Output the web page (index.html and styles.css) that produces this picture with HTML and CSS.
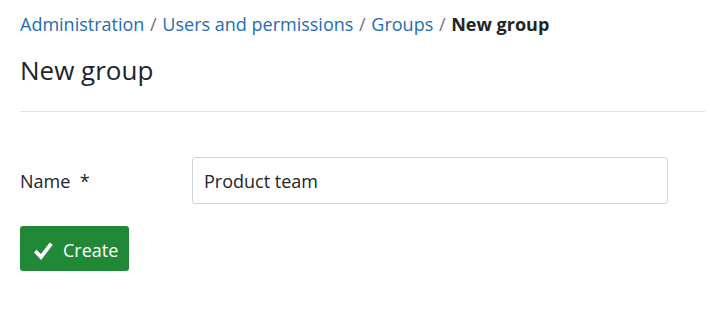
FILE: index.html
```html
<!DOCTYPE html>
<html lang="en">
<head>
    <meta charset="UTF-8">
    <meta name="viewport" content="width=device-width, initial-scale=1.0">
    <title>New group</title>
    <link rel="stylesheet" href="styles.css">
</head>
<body>
    <nav class="breadcrumb">
        <a href="#">Administration</a>
        <span class="sep">/</span>
        <a href="#">Users and permissions</a>
        <span class="sep">/</span>
        <a href="#">Groups</a>
        <span class="sep">/</span>
        <span class="current">New group</span>
    </nav>

    <h1>New group</h1>
    <hr>

    <form class="group-form">
        <div class="form-row">
            <label for="name">Name &nbsp;*</label>
            <input type="text" id="name" name="name" value="Product team">
        </div>
        <button type="submit" class="btn-create">
            <svg class="icon" width="20" height="19" viewBox="0 0 20 19">
                <polyline points="2.3,10 8,16 18.3,2.6" fill="none" stroke="#fff" stroke-width="3.8"/>
            </svg>
            <span>Create</span>
        </button>
    </form>
</body>
</html>
```
FILE: styles.css
```css
body {
    font-family: "Open Sans", sans-serif;
    margin: 0;
    padding: 10px 1px 0 20px;
    color: #212529;
    background-color: white;
}
.breadcrumb {
    font-size: 18px;
    line-height: 28px;
    white-space: nowrap;
}
.breadcrumb a {
    color: #1e6db2;
    text-decoration: none;
}
.sep {
    color: #6c757d;
    padding: 0 1px;
}
.current {
    font-weight: bold;
}
h1 {
    font-size: 26px;
    font-weight: normal;
    line-height: 36px;
    margin: 14px 0 23px 0;
}
hr {
    border: none;
    border-top: 1px solid #dee2e6;
    margin: 0;
}
.group-form {
    margin-top: 45px;
}
.form-row {
    display: grid;
    grid-template-columns: 172px 476px;
    align-items: center;
}
label {
    font-size: 18px;
}
input[type="text"] {
    height: 47px;
    box-sizing: border-box;
    padding: 0 11px;
    border: 1px solid #ced4da;
    border-radius: 3px;
    font-family: "Open Sans", sans-serif;
    font-size: 18px;
    color: #212529;
}
.btn-create {
    margin-top: 22px;
    display: flex;
    align-items: center;
    gap: 10px;
    height: 45px;
    box-sizing: border-box;
    padding: 12px 11px 9px 13px;
    background-color: #218838;
    color: white;
    border: none;
    border-radius: 3px;
    font-family: "Open Sans", sans-serif;
    font-size: 18px;
    line-height: 24px;
    cursor: pointer;
}
.icon {
    display: block;
}
```
